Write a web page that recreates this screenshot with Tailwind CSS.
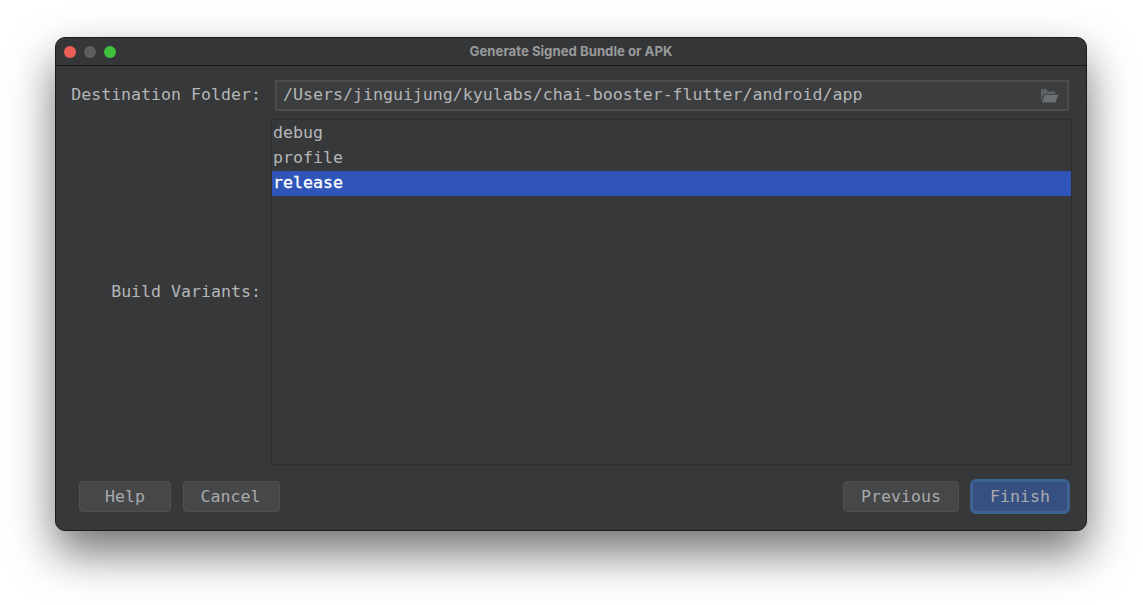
<!DOCTYPE html>
<html lang="en">
<head>
    <meta charset="utf-8"/>
    <meta name="viewport" content="width=device-width, initial-scale=1.0"/>
    <title>Generate Signed Bundle or APK</title>
    <script src="https://cdn.jsdelivr.net/npm/@tailwindcss/browser@4"></script>
</head>
<body class="bg-white h-[605px] overflow-hidden pt-[37px] pl-[55px] font-['DejaVu_Sans_Mono',monospace] text-[16.6px] text-[#b4b6b8]">
    <div class="w-[1032px] h-[494px] flex flex-col bg-[#37383a] rounded-[10px] border border-[#1c1c1d] shadow-[0_22px_45px_rgba(0,0,0,0.55)] overflow-hidden">
        <!-- title bar -->
        <header class="relative h-[28px] shrink-0 flex items-center justify-center bg-[#353638] border-b border-[#151516]">
            <div class="absolute left-[8px] top-[8px] flex gap-[8px]">
                <span class="w-[12px] h-[12px] rounded-full bg-[#ec5f56]"></span>
                <span class="w-[12px] h-[12px] rounded-full bg-[#5c5d5f]"></span>
                <span class="w-[12px] h-[12px] rounded-full bg-[#3fc03f]"></span>
            </div>
            <span class="font-['Inter',sans-serif] font-bold text-[13.2px] text-[#999a9c]">Generate Signed Bundle or APK</span>
        </header>

        <main class="flex-1 flex flex-col">
            <div class="flex items-center mt-[13px] h-[32px]">
                <label class="w-[205px] shrink-0 text-right">Destination Folder:</label>
                <div class="ml-[14px] w-[794px] h-[31px] flex items-center justify-between pl-[6px] pr-[8px] bg-[#3b3d3f] border-2 border-[#4a4c4e]">
                    <span>/Users/jinguijung/kyulabs/chai-booster-flutter/android/app</span>
                    <svg width="19" height="15" viewBox="0 0 19 15">
                        <path d="M1 1 L1 13 L3 7 Q3.3 6 4.5 6 L15 6 L15 3.5 L8 3.5 L6.5 1 Z" fill="#5f6365"/>
                        <path d="M4.5 6.8 L18.5 6.8 L15.5 14.5 L1.8 14.5 Z" fill="#6b6f71"/>
                    </svg>
                </div>
            </div>

            <div class="flex mt-[8px] h-[346px]">
                <label class="w-[205px] shrink-0 text-right self-center">Build Variants:</label>
                <ul class="ml-[10px] w-[801px] border border-[#2e2f31] pt-[1px] leading-[23px]">
                    <li class="h-[25px] pl-px">debug</li>
                    <li class="h-[25px] pl-px">profile</li>
                    <li class="h-[25px] pl-px bg-[#2f55b8] text-white [-webkit-text-stroke:0.3px_white]">release</li>
                </ul>
            </div>

            <footer class="flex items-center justify-between mt-[14px] pl-[23px] pr-[16px] text-[#a9abad]">
                <div class="flex gap-[12px]">
                    <button class="w-[92px] h-[31px] pt-px rounded-[4px] bg-[#454749] border border-[#4e5052]">Help</button>
                    <button class="w-[97px] h-[31px] pt-px pr-[2px] rounded-[4px] bg-[#454749] border border-[#4e5052]">Cancel</button>
                </div>
                <div class="flex gap-[11px] items-center">
                    <button class="w-[116px] h-[31px] pt-px rounded-[4px] bg-[#454749] border border-[#4e5052]">Previous</button>
                    <button class="w-[100px] h-[35px] pt-px rounded-[6px] bg-[#375082] border-[3px] border-[#3d6392]">Finish</button>
                </div>
            </footer>
        </main>
    </div>
</body>
</html>
